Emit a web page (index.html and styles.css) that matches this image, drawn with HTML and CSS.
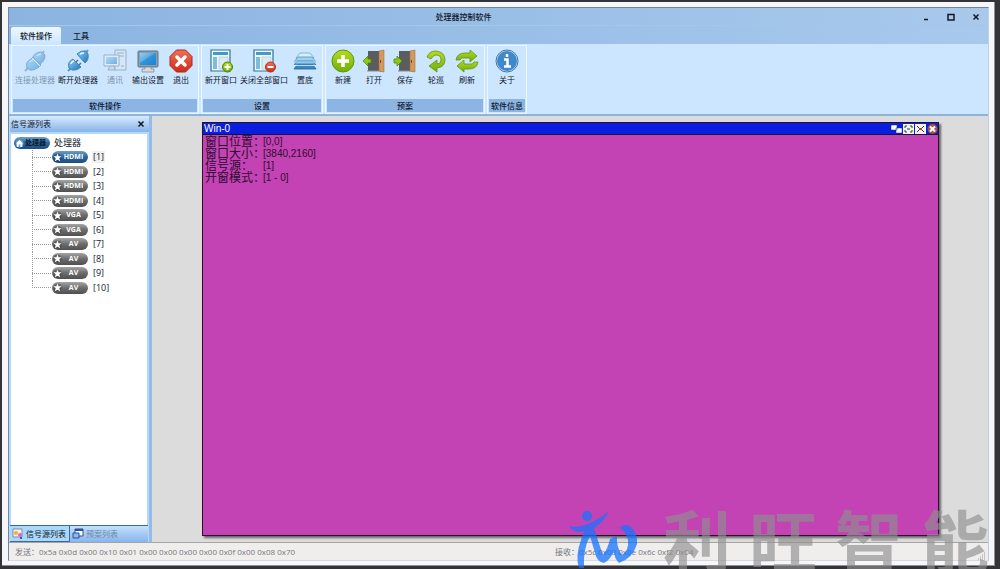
FILE: index.html
```html
<!DOCTYPE html>
<html lang="zh-CN">
  <head>
    <meta charset="UTF-8" />
    <title>处理器控制软件</title>
    <link rel="stylesheet" href="styles.css">
  </head>
  <body>
    <!-- Icon definitions -->
    <svg class="defs" width="0" height="0" aria-hidden="true">
      <defs>
        <linearGradient id="blue" x1="0" y1="0" x2="1" y2="1">
          <stop offset="0" stop-color="#8fd0f5" />
          <stop offset="1" stop-color="#1b76bf" />
        </linearGradient>
        <linearGradient id="green" x1="0" y1="0" x2="0" y2="1">
          <stop offset="0" stop-color="#b6dc1c" />
          <stop offset="1" stop-color="#6fae0c" />
        </linearGradient>
        <linearGradient id="red" x1="0" y1="0" x2="0" y2="1">
          <stop offset="0" stop-color="#f0705a" />
          <stop offset="1" stop-color="#cf2a18" />
        </linearGradient>
      </defs>
      <symbol id="plug-on" viewBox="0 0 24 24">
        <path d="M2 22l4-4M18 6l3-4" stroke="#5b86a8" stroke-width="2" />
        <path d="M4 19q-2-6 4-9l2-2 8 8-2 2q-5 4-9 3z" fill="url(#blue)" stroke="#2e6fa3" />
        <path d="M10 8q2-5 9-5l3 3q0 6-5 9z" fill="url(#blue)" stroke="#2e6fa3" />
        <path d="M9 9l8 8" stroke="#e9f6ff" stroke-width="1" />
        <path d="M7 13q1-2 3-2M14 7q2-2 4-2" stroke="#e9f6ff" fill="none" />
      </symbol>
      <symbol id="plug-off" viewBox="0 0 24 24">
        <path d="M2 22l4-4M19 5l3-4" stroke="#6b93b3" stroke-width="2" />
        <path d="M9 14l3-3M12 17l3-3" stroke="#5d7486" stroke-width="1.500" />
        <path d="M3 19q-2-6 4-9l8 8q-4 4-9 3z" fill="url(#blue)" stroke="#3f82b8" />
        <path d="M11 5q4-4 9-3l2 3q1 6-3 9z" fill="url(#blue)" stroke="#3f82b8" />
        <path d="M5 15q0-2 3-3M14 5q2-1 4-1" stroke="#e9f6ff" stroke-width="1.500" fill="none" />
      </symbol>
      <symbol id="network" viewBox="0 0 24 24">
        <path d="M12 1h11v20H12z" fill="#dfe7ed" stroke="#6c7f8e" />
        <path d="M14 4h7M14 7h7M18 17h3" stroke="#6c7f8e" />
        <path d="M1 6h15v11H1z" fill="#eef3f7" stroke="#6c7f8e" />
        <path d="M3 8h11v7H3z" fill="url(#blue)" />
        <path d="M7 17h4l1 4H5z" fill="#c5d0d8" stroke="#6c7f8e" />
      </symbol>
      <symbol id="monitor" viewBox="0 0 24 24">
        <rect x="2" y="2" width="20" height="16" rx="1" fill="#8aa0b0" stroke="#5c7384" />
        <path d="M4 4h16v12H4z" fill="url(#blue)" />
        <path d="M4 14L19 4h1v12H4z" fill="#1788d8" opacity=".6" />
        <path d="M9 18h6v2h3v3H6v-3h3z" fill="#d4dade" stroke="#75818a" stroke-width=".7" />
      </symbol>
      <symbol id="exit" viewBox="0 0 24 24">
        <path d="M7.500 1h9L23 7.500v9L16.500 23h-9L1 16.500v-9z" fill="url(#red)" stroke="#a82a1c" />
        <path d="M8 8l8 8M16 8l-8 8" stroke="#fff" stroke-width="3.500" stroke-linecap="round" />
      </symbol>
      <symbol id="layout" viewBox="0 0 24 24">
        <path d="M2 1h19v21H2z" fill="#f2f8fb" stroke="#2c7399" stroke-width="1.200" />
        <path d="M4 3h15v3H4z" fill="#3f9cc6" />
        <path d="M4 8h4v12H4z" fill="#7bbedb" />
        <path d="M10 8h9v12h-9z" fill="#dcebf2" stroke="#91bfd3" stroke-width=".6" />
      </symbol>
      <symbol id="win-add" viewBox="0 0 24 24">
        <use href="#layout" />
        <circle cx="18.500" cy="18" r="5" fill="url(#green)" stroke="#4b7c0c" />
        <path d="M15.500 18h6M18.500 15v6" stroke="#fff" stroke-width="2" />
      </symbol>
      <symbol id="win-del" viewBox="0 0 24 24">
        <use href="#layout" />
        <circle cx="18.500" cy="18" r="5" fill="url(#red)" stroke="#b03020" />
        <path d="M15.500 18h6" stroke="#fff" stroke-width="2" />
      </symbol>
      <symbol id="layers" viewBox="0 0 24 24">
        <path d="M7 4h10l4 5H3z" fill="#d6effc" stroke="#67a8d2" stroke-width=".8" />
        <path d="M5 8h14l4 5H1z" fill="#9fd2ef" stroke="#4b93c5" stroke-width=".8" />
        <path d="M4 12h16l3 4H1z" fill="#62aadb" stroke="#2e77b0" stroke-width=".8" />
        <path d="M4 16h16l3 4H1z" fill="#3c88c4" stroke="#1f609a" stroke-width=".8" />
        <path d="M1 13h22M1 16.500h22" stroke="#e4f5ff" stroke-width=".8" />
      </symbol>
      <symbol id="add" viewBox="0 0 24 24">
        <circle cx="12" cy="12" r="11" fill="url(#green)" stroke="#5f9410" />
        <path d="M6 12h12M12 6v12" stroke="#fff" stroke-width="3.500" />
      </symbol>
      <symbol id="door" viewBox="0 0 24 24">
        <path d="M6 2h15v20H6z" fill="#5b5c5f" />
        <path d="M5 22h15" stroke="#8a8c8e" />
        <path d="M17 2l5-1v22l-5-1z" fill="#d29a5d" stroke="#a56f38" stroke-width=".6" />
        <path d="M18.500 11v3" stroke="#7b4a1e" />
      </symbol>
      <symbol id="door-open" viewBox="0 0 24 24">
        <use href="#door" />
        <path d="M1 12l5-5v3h3v4H6v3z" fill="#8cc814" stroke="#4f8708" stroke-width=".8" />
      </symbol>
      <symbol id="door-save" viewBox="0 0 24 24">
        <use href="#door" />
        <path d="M9 12L4 7v3H1v4h3v3z" fill="#8cc814" stroke="#4f8708" stroke-width=".8" />
      </symbol>
      <symbol id="cycle" viewBox="0 0 24 24">
        <path d="M3 8Q5 2 12 2q9 1 9 9 0 7-8 8v4l-8-6 8-6v4q4 0 4-4 0-5-5-5-3 0-5 4z" fill="url(#green)" stroke="#5f9410" stroke-width=".8" />
      </symbol>
      <symbol id="refresh" viewBox="0 0 24 24">
        <path d="M1 11Q2 4 10 4h5V1l7 6-7 6V9h-5Q6 8 5 11z" fill="url(#green)" stroke="#5f9410" stroke-width=".8" />
        <path d="M23 13q-1 7-9 7H9v3l-7-6 7-6v4h5q4 1 5-2z" fill="url(#green)" stroke="#5f9410" stroke-width=".8" />
      </symbol>
      <symbol id="info" viewBox="0 0 24 24">
        <circle cx="12" cy="12" r="11" fill="#cfe2f2" stroke="#3c78ae" />
        <circle cx="12" cy="12" r="10" fill="#3f88c9" />
        <path d="M12 5v3M9 10.500h3.500V17M9 17.500h7" stroke="#fff" stroke-width="2.500" fill="none" />
      </symbol>
      <symbol id="star" viewBox="0 0 10 10">
        <circle cx="5" cy="5" r="4.500" fill="#222" opacity=".35" />
        <path d="M5 .5l1.200 3L9.500 3.700 7 5.800l1 3.500L5 7.500 2 9.300l1-3.500L.5 3.700l3.300-.2z" fill="#fff" />
      </symbol>
      <symbol id="home" viewBox="0 0 10 10">
        <circle cx="5" cy="5" r="4.500" fill="#5b9dd0" />
        <path d="M5 1l4 4H8v4H6V6H4v3H2V5H1z" fill="#fff" />
      </symbol>
    </svg>

    <div class="frame">
      <div class="app">
        <header class="titlebar">
          <h1>处理器控制软件</h1>
          <div class="window-buttons">
            <button aria-label="最小化"><svg viewBox="0 0 8 8"><path d="M2 6.500h4" /></svg></button>
            <button aria-label="最大化"><svg viewBox="0 0 8 8"><path d="M1 1.500h6v5.500H1z" /></svg></button>
            <button aria-label="关闭"><svg viewBox="0 0 8 8"><path d="M1.500 1.500l5 5M6.500 1.500l-5 5" /></svg></button>
          </div>
        </header>

        <nav class="tabs">
          <button class="tab active">软件操作</button>
          <button class="tab">工具</button>
        </nav>

        <div class="ribbon">
          <section class="group">
            <div class="tools">
              <button class="tool" disabled><svg><use href="#plug-on" /></svg>连接处理器</button>
              <button class="tool"><svg><use href="#plug-off" /></svg>断开处理器</button>
              <button class="tool" disabled><svg><use href="#network" /></svg>通讯</button>
              <button class="tool"><svg><use href="#monitor" /></svg>输出设置</button>
              <button class="tool"><svg><use href="#exit" /></svg>退出</button>
            </div>
            <h2>软件操作</h2>
          </section>
          <section class="group">
            <div class="tools">
              <button class="tool"><svg><use href="#win-add" /></svg>新开窗口</button>
              <button class="tool"><svg><use href="#win-del" /></svg>关闭全部窗口</button>
              <button class="tool"><svg><use href="#layers" /></svg>置底</button>
            </div>
            <h2>设置</h2>
          </section>
          <section class="group">
            <div class="tools">
              <button class="tool"><svg><use href="#add" /></svg>新建</button>
              <button class="tool"><svg><use href="#door-open" /></svg>打开</button>
              <button class="tool"><svg><use href="#door-save" /></svg>保存</button>
              <button class="tool"><svg><use href="#cycle" /></svg>轮巡</button>
              <button class="tool"><svg><use href="#refresh" /></svg>刷新</button>
            </div>
            <h2>预案</h2>
          </section>
          <section class="group">
            <div class="tools">
              <button class="tool"><svg><use href="#info" /></svg>关于</button>
            </div>
            <h2>软件信息</h2>
          </section>
        </div>

        <main class="workspace">
          <aside class="panel">
            <div class="panel-head">
              <span>信号源列表</span>
              <button aria-label="关闭面板"><svg viewBox="0 0 8 8"><path d="M1.500 1.500l5 5M6.500 1.500l-5 5" /></svg></button>
            </div>
            <div class="panel-body">
              <div class="root"><span class="badge blue dark"><svg><use href="#home" /></svg><b>处理器</b></span>处理器</div>
              <ul class="tree">
                <li><span class="badge blue"><svg><use href="#star" /></svg><b>HDMI</b></span><span class="num selected">[1]</span></li>
                <li><span class="badge"><svg><use href="#star" /></svg><b>HDMI</b></span><span class="num">[2]</span></li>
                <li><span class="badge"><svg><use href="#star" /></svg><b>HDMI</b></span><span class="num">[3]</span></li>
                <li><span class="badge"><svg><use href="#star" /></svg><b>HDMI</b></span><span class="num">[4]</span></li>
                <li><span class="badge"><svg><use href="#star" /></svg><b>VGA</b></span><span class="num">[5]</span></li>
                <li><span class="badge"><svg><use href="#star" /></svg><b>VGA</b></span><span class="num">[6]</span></li>
                <li><span class="badge"><svg><use href="#star" /></svg><b>AV</b></span><span class="num">[7]</span></li>
                <li><span class="badge"><svg><use href="#star" /></svg><b>AV</b></span><span class="num">[8]</span></li>
                <li><span class="badge"><svg><use href="#star" /></svg><b>AV</b></span><span class="num">[9]</span></li>
                <li><span class="badge"><svg><use href="#star" /></svg><b>AV</b></span><span class="num">[10]</span></li>
              </ul>
            </div>
            <div class="panel-tabs">
              <button class="panel-tab active">
                <svg viewBox="0 0 12 12"><path d="M1 1h9v8H1z" fill="#f3f1e4" stroke="#7f8bb0" /><circle cx="4" cy="5" r="2" fill="#f0b32c" /><circle cx="8" cy="7" r="2" fill="#d764c8" /><path d="M9 9v2" stroke="#3a58b4" stroke-width="2" /></svg>信号源列表
              </button>
              <button class="panel-tab">
                <svg viewBox="0 0 12 12"><path d="M3 1h8v7H3z" fill="#fff" stroke="#2a4f9d" /><path d="M3 2h8" stroke="#2a4f9d" stroke-width="2" /><path d="M1 5h6v5H1z" fill="#8db7ee" stroke="#2a4f9d" /></svg>预案列表
              </button>
            </div>
          </aside>

          <div class="canvas">
            <section class="win">
              <div class="win-head">
                <span>Win-0</span>
                <div class="win-buttons">
                  <button aria-label="还原"><svg viewBox="0 0 11 10"><path d="M0 1h6v5H0zM5 4h6v5H5z" fill="#fff" stroke="#1a2a80" stroke-width=".5" /></svg></button>
                  <button aria-label="全屏"><svg viewBox="0 0 11 10"><path d="M0 0h11v10H0z" fill="#f4f4ee" /><path d="M2 4V2h2M7 2h2v2M2 6v2h2M7 8h2V6M4 5h3" fill="none" stroke="#2c4a2c" /></svg></button>
                  <button aria-label="缩小"><svg viewBox="0 0 11 10"><path d="M0 0h11v10H0z" fill="#f4f4ee" /><path d="M2 2l2 2M9 2L7 4M2 8l2-2M9 8L7 6" stroke="#3c3030" /><path d="M4 5h3" stroke="#b03a3a" stroke-width="2" /></svg></button>
                  <button aria-label="关闭窗口"><svg viewBox="0 0 11 10"><circle cx="5.500" cy="5" r="5" fill="#a5563c" /><path d="M3 2.500l5 5M8 2.500l-5 5" stroke="#fff" stroke-width="2" /></svg></button>
                </div>
              </div>
              <dl class="win-info">
                <dt>窗口位置：</dt><dd>[0,0]</dd>
                <dt>窗口大小：</dt><dd>[3840,2160]</dd>
                <dt>信号源：</dt><dd>[1]</dd>
                <dt>开窗模式：</dt><dd>[1 - 0]</dd>
              </dl>
            </section>
          </div>
        </main>

        <footer class="status">
          <span>发送：0x5a 0x0d 0x00 0x10 0x01 0x00 0x00 0x00 0x00 0x0f 0x00 0x08 0x70</span>
          <span>接收：0x5c 0x08 0x0e 0x6c 0xf2 0x04</span>
          <svg class="grip" viewBox="0 0 8 8"><path d="M6 1h1M6 3h1M4 3h1M6 5h1M4 5h1M2 5h1M6 7h1M4 7h1M2 7h1M0 7h1" stroke="#9c9a9a" /></svg>
        </footer>
      </div>
    </div>

    <div class="watermark">
      <svg viewBox="0 0 72 62">
        <circle cx="20" cy="8" r="5" />
        <path d="M2 18Q18 22 42 3 36 15 27 20L22 30Q16 42 17 60H12Q8 48 14 32L17 23Q7 26 2 18z" />
        <path d="M27 20Q32 36 36 47 41 40 43 31L50 28Q49 39 55 47 62 43 61 32 59 24 53 20 57 15 63 18 71 25 70 36 66 50 52 55 47 50 47 43 43 52 37 55 30 54 28 45L23 28z" />
      </svg>
      <span>利</span><span>旺</span><span>智</span><span>能</span>
    </div>
  </body>
</html>
```

FILE: styles.css
```css
:root {
  --ribbon: #cce6ff;
  --bar: #8cb5e3;
  --text: #10182c;
  --muted: #77797c;
}

* {
  box-sizing: border-box;
}

body {
  margin: 0;
  height: 100vh;
  padding: 2px 5px 3px 2px;
  display: flex;
  overflow: hidden;
  position: relative;
  background: #343336;
  font-family: "Open Sans", "Noto Sans CJK SC", sans-serif;
  font-size: 8px;
  line-height: 12px;
  color: var(--text);
}

button {
  border: 0;
  padding: 0;
  background: none;
  font: inherit;
  color: inherit;
}

h1,
h2 {
  margin: 0;
  font-size: 8px;
  font-weight: 500;
}

.defs {
  position: absolute;
}

.frame {
  flex: 1;
  display: flex;
  padding: 5px 5px 4px 6px;
  background: #f6f7fb;
  border-right: 1px solid #8d9094;
  border-bottom: 1px solid #8d9094;
}

.app {
  flex: 1;
  min-width: 0;
  display: flex;
  flex-direction: column;
  border: 1px solid #73849a;
  border-right-color: #c3cddb;
  border-bottom-color: #d8d8de;
}

/* Title bar and tabs */
.titlebar {
  display: flex;
  align-items: center;
  height: 18px;
  padding-right: 4px;
  background: linear-gradient(90deg, #8bb4e1, #a8c9ec);
  border-bottom: 1px solid #a5c6ea;
}

.titlebar h1 {
  flex: 1;
  text-align: center;
}

.window-buttons {
  display: flex;
  gap: 9px;
}

.window-buttons button,
.panel-head button {
  width: 16px;
  height: 12px;
}

.window-buttons svg,
.panel-head svg {
  display: block;
  width: 8px;
  height: 8px;
  margin: auto;
  fill: none;
  stroke: #101828;
  stroke-width: 1.5;
}

.tabs {
  display: flex;
  height: 18px;
  padding-left: 2px;
  background: linear-gradient(90deg, #8bb4e1, #a8c9ec);
}

.tab {
  padding: 0 9px;
  margin-top: 1px;
  border-radius: 2px 2px 0 0;
  font-weight: 500;
}

.tab.active {
  margin-right: 3px;
  background: linear-gradient(#eef8ff, var(--ribbon));
}

/* Ribbon */
.ribbon {
  display: flex;
  gap: 2px;
  height: 72px;
  padding: 1px 2px 0;
  background: var(--ribbon);
  border-bottom: 2px solid #8fb4db;
}

.group {
  display: flex;
  flex-direction: column;
  padding: 1px;
  border: 1px solid #ecf8ff;
}

.tools {
  flex: 1;
  display: flex;
  justify-content: center;
  align-items: flex-start;
  gap: 1px;
  padding: 2px 1px 0;
}

.tool {
  display: flex;
  flex-direction: column;
  align-items: center;
  gap: 1px;
  min-width: 30px;
  padding: 0 1px;
  white-space: nowrap;
}

.tool svg {
  width: 24px;
  height: 24px;
}

.tool:disabled {
  color: #7f96ad;
}

.tool:disabled svg {
  opacity: 0.5;
}

.group h2 {
  padding: 0 2px;
  text-align: center;
  line-height: 13px;
  background: var(--bar);
}

/* Workspace */
.workspace {
  flex: 1;
  min-height: 0;
  display: flex;
}

.panel {
  width: 143px;
  display: flex;
  flex-direction: column;
  padding-left: 1px;
  background: #b2d9fc;
  border-right: 3px solid #96bbe8;
}

.panel-head {
  display: flex;
  align-items: center;
  justify-content: space-between;
  height: 16px;
  padding-left: 1px;
  background: linear-gradient(#d6eafe, #86b3e8);
}

.panel-body {
  flex: 1;
  margin: 2px 2px 0 1px;
  padding-top: 3px;
  background: #fff;
}

.root {
  display: flex;
  align-items: center;
  gap: 4px;
  padding-left: 3px;
  font-size: 9px;
}

.tree {
  display: grid;
  grid-template-rows: repeat(10, 1fr);
  height: 145px;
  margin: 1px 0 0 21px;
  padding: 0;
  list-style: none;
  font-size: 9px;
}

.tree li {
  display: flex;
  align-items: center;
}

/* Dotted branch lines */
.tree li::before {
  content: "";
  align-self: stretch;
  width: 20px;
  background:
    repeating-linear-gradient(90deg, #999 0 1px, transparent 1px 2px) 0 50% / 100% 1px no-repeat,
    repeating-linear-gradient(#999 0 1px, transparent 1px 2px) 0 0 / 1px 100% no-repeat;
}

.tree li:last-child::before {
  background-size: 100% 1px, 1px 50%;
}

.badge {
  display: flex;
  align-items: center;
  width: 36px;
  height: 12px;
  padding-left: 1px;
  border-radius: 6px;
  background: linear-gradient(#a5a5a5, #6c6c6c 50%, #505050);
  color: #fff;
  font-size: 7px;
  line-height: 12px;
}

.badge svg {
  width: 9px;
  height: 9px;
}

.badge b {
  flex: 1;
  padding-right: 3px;
  text-align: center;
}

.badge.blue {
  background: linear-gradient(#6f9fc8, #2c659b 50%, #1e4d80);
}

.badge.dark {
  color: #0b1a30;
}

.num {
  margin-left: 4px;
  padding: 0 1px;
}

.num.selected {
  background: #f0f0f0;
}

.panel-tabs {
  display: flex;
  height: 17px;
  margin: 0 1px 0 0;
  border-top: 1px solid #3b6a9d;
  background: linear-gradient(#c5e0fb, #86b5ec);
}

.panel-tab {
  display: flex;
  align-items: center;
  gap: 2px;
  padding: 0 3px 0 2px;
  color: #6d87a8;
}

.panel-tab svg {
  width: 12px;
  height: 12px;
}

.panel-tab.active {
  background: #a9d8fa;
  border-right: 1px solid #3b6a9d;
  border-bottom: 1px solid #3b6a9d;
  color: var(--text);
}

.canvas {
  flex: 1;
  position: relative;
  background: #dcdcdc;
}

.win {
  position: absolute;
  inset: 6px 49px 6px 50px;
  background: #c443b4;
  border: 1px solid #2a1028;
  box-shadow: 2px 2px 2px #666;
  font-family: "Liberation Sans", "Noto Sans CJK SC", sans-serif;
  font-size: 10px;
}

.win-head {
  display: flex;
  align-items: center;
  justify-content: space-between;
  height: 12px;
  padding: 0 0 0 1px;
  background: #0a1ee0;
  border-bottom: 1px solid #14103c;
  color: #fff;
}

.win-buttons {
  display: flex;
  gap: 1px;
}

.win-buttons svg {
  display: block;
  width: 11px;
  height: 10px;
}

.win-info {
  display: grid;
  grid-template-columns: 58px 1fr;
  margin: 0;
  padding: 1px 2px;
  color: #2a0c2c;
}

.win-info dt {
  font-size: 12px;
  white-space: nowrap;
}

.win-info dd {
  margin: 0;
}

/* Status bar */
.status {
  display: grid;
  grid-template-columns: 540px 1fr 8px;
  align-items: center;
  height: 18px;
  padding: 0 2px 0 6px;
  background: #f0eded;
  border-top: 1px solid #a5a5a5;
  color: var(--muted);
}

.grip {
  width: 8px;
  height: 8px;
  align-self: end;
}

/* Watermark over the lower right corner */
.watermark {
  position: absolute;
  right: 11px;
  bottom: -7px;
  display: flex;
  align-items: flex-start;
  gap: 18px;
  pointer-events: none;
  font-size: 68px;
  font-weight: 700;
  line-height: 68px;
  color: rgba(143, 143, 143, 0.65);
}

.watermark svg {
  width: 72px;
  height: 62px;
  margin-right: 6px;
  fill: rgba(20, 115, 255, 0.75);
}
```
